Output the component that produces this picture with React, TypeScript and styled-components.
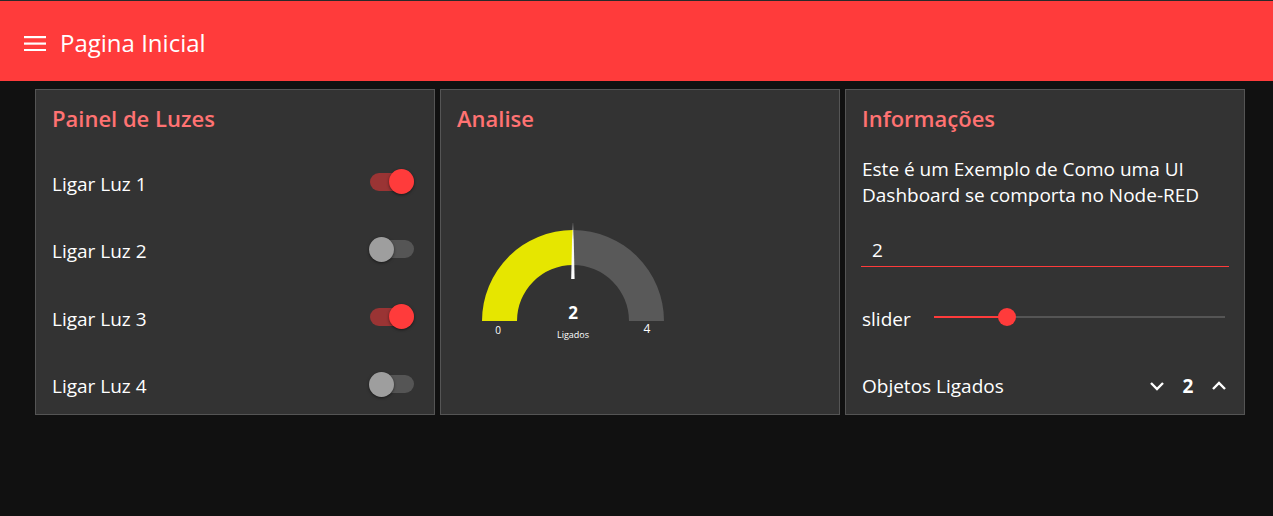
import styled, { createGlobalStyle } from 'styled-components';

const GlobalStyle = createGlobalStyle`
  body {
    margin: 0;
    background: #111111;
    font-family: 'Open Sans', 'Noto Sans', sans-serif;
    color: #ffffff;
  }
`;

const RED = '#ff3b3b';

const Header = styled.header`
  box-sizing: border-box;
  height: 81px;
  border-top: 1px solid #2a2a2a;
  background: ${RED};
  display: flex;
  align-items: center;
  padding: 3px 0 0 24px;
`;

const HeaderTitle = styled.h1`
  margin: 0 0 0 14px;
  font-size: 24px;
  font-weight: 400;
  color: #ffffff;
`;

const Main = styled.main`
  display: flex;
  gap: 5px;
  padding: 8px 0 8px 35px;
`;

const Card = styled.section`
  box-sizing: border-box;
  flex: 0 0 400px;
  height: 326px;
  background: #333333;
  border: 1px solid #555555;
  padding: 0 16px;
  overflow: hidden;
`;

const CardTitle = styled.h2`
  margin: 0 0 4px 0;
  height: 60px;
  line-height: 57px;
  font-size: 22px;
  font-weight: 600;
  color: #ff7272;
`;

const Stack = styled.div`
  display: flex;
  flex-direction: column;
  gap: 7.5px;
`;

const Row = styled.div`
  height: 60px;
  display: flex;
  align-items: center;
  justify-content: space-between;
  font-size: 19px;
  line-height: 24px;
  padding-bottom: 1px;
  box-sizing: border-box;
`;

const Track = styled.div<{ $on: boolean }>`
  position: relative;
  width: 44px;
  height: 18px;
  margin: 0 4px 4px 0;
  border-radius: 9px;
  background: ${(p) => (p.$on ? '#9a3434' : '#555555')};
`;

const Thumb = styled.div<{ $on: boolean }>`
  position: absolute;
  top: -3.5px;
  left: ${(p) => (p.$on ? '19px' : '-1px')};
  width: 25px;
  height: 25px;
  border-radius: 50%;
  background: ${(p) => (p.$on ? RED : '#9e9e9e')};
  box-shadow: 0 1px 3px rgba(0, 0, 0, 0.5);
`;

const Toggle = ({ on }: { on: boolean }) => (
  <Track $on={on}>
    <Thumb $on={on} />
  </Track>
);

const GaugeBox = styled.div`
  height: 262px;
`;

const InfoText = styled.p`
  margin: 0;
  height: 60px;
  padding-top: 2px;
  box-sizing: border-box;
  font-size: 19px;
  line-height: 26px;
`;

const InputRow = styled.div`
  height: 60px;
  display: flex;
  align-items: flex-end;
`;

const InputField = styled.div`
  flex: 1;
  height: 32px;
  margin: 0 -1px 14.5px -1px;
  padding-left: 11px;
  border-bottom: 1px solid ${RED};
  font-size: 19px;
  line-height: 32px;
`;

const SliderTrack = styled.div`
  position: relative;
  width: 291px;
  height: 2px;
  margin: 0 3px 4px 0;
  background: #555555;
`;

const SliderFill = styled.div`
  height: 2px;
  background: ${RED};
`;

const SliderThumb = styled.div`
  position: absolute;
  top: -8px;
  width: 18px;
  height: 18px;
  margin-left: -9px;
  border-radius: 50%;
  background: ${RED};
`;

const Stepper = styled.div`
  display: flex;
  align-items: center;
  gap: 13px;
`;

const StepValue = styled.span`
  font-weight: 700;
  font-size: 19px;
  width: 18px;
  text-align: center;
`;

const Chevron = ({ up }: { up?: boolean }) => (
  <svg width="18" height="18" viewBox="0 0 18 18">
    <polyline
      points={up ? '3,12 9,6 15,12' : '3,6 9,12 15,6'}
      fill="none"
      stroke="#ffffff"
      strokeWidth="2.4"
    />
  </svg>
);

const lights = [true, false, true, false];
const sliderPct = 25;

export default function App() {
  return (
    <>
      <GlobalStyle />
      <Header>
        <svg width="22" height="16" viewBox="0 0 22 16">
          <rect x="0" y="1" width="22" height="2.2" fill="#fff" />
          <rect x="0" y="7.5" width="22" height="2.2" fill="#fff" />
          <rect x="0" y="14" width="22" height="2.2" fill="#fff" />
        </svg>
        <HeaderTitle>Pagina Inicial</HeaderTitle>
      </Header>
      <Main>
        <Card>
          <CardTitle>Painel de Luzes</CardTitle>
          <Stack>
            {lights.map((on, i) => (
              <Row key={i}>
                <span>Ligar Luz {i + 1}</span>
                <Toggle on={on} />
              </Row>
            ))}
          </Stack>
        </Card>

        <Card>
          <CardTitle>Analise</CardTitle>
          <GaugeBox>
            <svg width="232" height="262" viewBox="0 0 232 262">
              <defs>
                <linearGradient id="needle" x1="0" y1="0" x2="0" y2="1">
                  <stop offset="0" stopColor="#ffffff" stopOpacity="0.1" />
                  <stop offset="0.3" stopColor="#ffffff" stopOpacity="0.9" />
                  <stop offset="1" stopColor="#ffffff" />
                </linearGradient>
              </defs>
              <path d="M 25 167 A 91 91 0 0 1 116 76 L 116 111 A 56 56 0 0 0 60 167 Z" fill="#e6e600" />
              <path d="M 116 76 A 91 91 0 0 1 207 167 L 172 167 A 56 56 0 0 0 116 111 Z" fill="#595959" />
              <polygon points="115.4,69 116.4,69 117.6,125 114.2,125" fill="url(#needle)" />
              <g fontFamily="'Open Sans', sans-serif" fill="#ffffff" textAnchor="middle">
                <text x="41" y="180" fontSize="10">0</text>
                <text x="190" y="179" fontSize="12">4</text>
                <text x="116" y="165" fontSize="17" fontWeight="700">2</text>
                <text x="116" y="184" fontSize="9">Ligados</text>
              </g>
            </svg>
          </GaugeBox>
        </Card>

        <Card>
          <CardTitle>Informações</CardTitle>
          <Stack>
            <InfoText>
              Este é um Exemplo de Como uma UI
              <br />
              Dashboard se comporta no Node-RED
            </InfoText>
            <InputRow>
              <InputField>2</InputField>
            </InputRow>
            <Row>
              <span>slider</span>
              <SliderTrack>
                <SliderFill style={{ width: `${sliderPct}%` }} />
                <SliderThumb style={{ left: `${sliderPct}%` }} />
              </SliderTrack>
            </Row>
            <Row>
              <span>Objetos Ligados</span>
              <Stepper>
                <Chevron />
                <StepValue>2</StepValue>
                <Chevron up />
              </Stepper>
            </Row>
          </Stack>
        </Card>
      </Main>
    </>
  );
}
